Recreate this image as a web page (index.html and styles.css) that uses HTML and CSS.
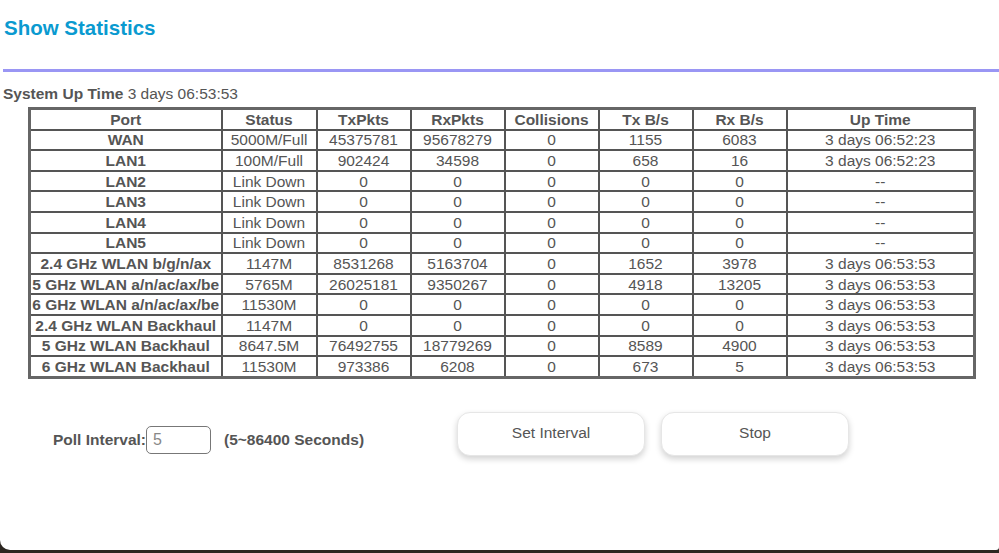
FILE: index.html
```html
<!DOCTYPE html>
<html>
<head>
<meta charset="utf-8">
<link rel="stylesheet" href="styles.css">
</head>
<body>
<div class="page">
  <h1 class="title">Show Statistics</h1>
  <div class="rule"></div>
  <div class="uptime"><b>System Up Time</b> 3 days 06:53:53</div>
  <table class="stats">
    <colgroup>
      <col class="c-port"><col class="c-status"><col class="c-num"><col class="c-num"><col class="c-num"><col class="c-num"><col class="c-num"><col class="c-up">
    </colgroup>
    <thead>
      <tr><th>Port</th><th>Status</th><th>TxPkts</th><th>RxPkts</th><th>Collisions</th><th>Tx B/s</th><th>Rx B/s</th><th>Up Time</th></tr>
    </thead>
    <tbody>
      <tr><th>WAN</th><td>5000M/Full</td><td>45375781</td><td>95678279</td><td>0</td><td>1155</td><td>6083</td><td>3 days 06:52:23</td></tr>
      <tr><th>LAN1</th><td>100M/Full</td><td>902424</td><td>34598</td><td>0</td><td>658</td><td>16</td><td>3 days 06:52:23</td></tr>
      <tr><th>LAN2</th><td>Link Down</td><td>0</td><td>0</td><td>0</td><td>0</td><td>0</td><td>--</td></tr>
      <tr><th>LAN3</th><td>Link Down</td><td>0</td><td>0</td><td>0</td><td>0</td><td>0</td><td>--</td></tr>
      <tr><th>LAN4</th><td>Link Down</td><td>0</td><td>0</td><td>0</td><td>0</td><td>0</td><td>--</td></tr>
      <tr><th>LAN5</th><td>Link Down</td><td>0</td><td>0</td><td>0</td><td>0</td><td>0</td><td>--</td></tr>
      <tr><th>2.4 GHz WLAN b/g/n/ax</th><td>1147M</td><td>8531268</td><td>5163704</td><td>0</td><td>1652</td><td>3978</td><td>3 days 06:53:53</td></tr>
      <tr><th>5 GHz WLAN a/n/ac/ax/be</th><td>5765M</td><td>26025181</td><td>9350267</td><td>0</td><td>4918</td><td>13205</td><td>3 days 06:53:53</td></tr>
      <tr><th>6 GHz WLAN a/n/ac/ax/be</th><td>11530M</td><td>0</td><td>0</td><td>0</td><td>0</td><td>0</td><td>3 days 06:53:53</td></tr>
      <tr><th>2.4 GHz WLAN Backhaul</th><td>1147M</td><td>0</td><td>0</td><td>0</td><td>0</td><td>0</td><td>3 days 06:53:53</td></tr>
      <tr><th>5 GHz WLAN Backhaul</th><td>8647.5M</td><td>76492755</td><td>18779269</td><td>0</td><td>8589</td><td>4900</td><td>3 days 06:53:53</td></tr>
      <tr><th>6 GHz WLAN Backhaul</th><td>11530M</td><td>973386</td><td>6208</td><td>0</td><td>673</td><td>5</td><td>3 days 06:53:53</td></tr>
    </tbody>
  </table>
  <div class="controls">
    <div class="poll">
      <span class="poll-label">Poll Interval:</span>
      <input class="poll-input" type="text" value="5">
      <span class="poll-range">(5~86400 Seconds)</span>
    </div>
    <div class="buttons">
      <button class="btn">Set Interval</button>
      <button class="btn">Stop</button>
    </div>
  </div>
</div>
</body>
</html>
```

FILE: styles.css
```css
html, body {
  margin: 0;
  padding: 0;
  height: 100%;
  background: #2b2620;
}
body {
  font-family: "Liberation Sans", Arial, sans-serif;
  color: #555;
  overflow: hidden;
}
.page {
  background: #fff;
  height: 550px;
  border-bottom-left-radius: 10px;
  border-bottom-right-radius: 3px;
  box-sizing: border-box;
  padding-top: 15px;
}
.title {
  margin: 0 0 0 4px;
  font-size: 20.5px;
  line-height: 25px;
  font-weight: bold;
  color: #0a9ad0;
}
.rule {
  margin: 29px 0 0 3px;
  height: 3px;
  background: #9a96f4;
}
.uptime {
  margin: 13px 0 0 3px;
  font-size: 15.5px;
  line-height: 18px;
  color: #555;
}
.stats {
  margin: 4px 0 0 28px;
  width: 947px;
  table-layout: fixed;
  border-collapse: collapse;
  border: 3px solid #666;
  font-size: 15.5px;
  color: #555;
}
.c-port { width: 192px; }
.c-status { width: 95px; }
.c-num { width: 94px; }
.c-up { width: 188px; }
.stats th, .stats td {
  border: 2px solid #555;
  height: 18.6px;
  line-height: 17px;
  padding: 0;
  text-align: center;
  white-space: nowrap;
  overflow: hidden;
}
.stats th {
  font-weight: bold;
}
.controls {
  display: flex;
  align-items: center;
  margin-top: 33px;
}
.poll {
  display: flex;
  align-items: center;
  margin-left: 53px;
  margin-top: 12px;
  font-size: 15.5px;
  font-weight: bold;
}
.poll-input {
  width: 65px;
  height: 28px;
  box-sizing: border-box;
  border: 1px solid #777;
  border-radius: 5px;
  padding: 0 6px;
  font-family: "Liberation Sans", Arial, sans-serif;
  font-size: 16px;
  color: #888;
  margin: 0 13px 0 0;
}
.buttons {
  display: flex;
  gap: 16px;
  margin-left: 93px;
}
.btn {
  width: 188px;
  height: 44px;
  border: 1px solid #e6e6e6;
  border-radius: 13px;
  background: #fff;
  box-shadow: 0 3px 6px rgba(0,0,0,0.18);
  font-family: "Liberation Sans", Arial, sans-serif;
  font-size: 15.5px;
  color: #555;
  padding: 0 0 2px;
}
```
